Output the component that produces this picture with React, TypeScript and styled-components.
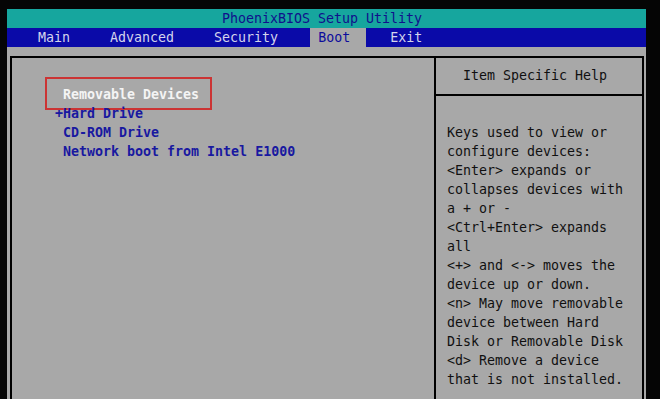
import React from 'react';
import styled, { createGlobalStyle } from 'styled-components';

const GlobalStyle = createGlobalStyle`
  html, body {
    margin: 0;
    padding: 0;
    background: #050505;
  }
  body {
    font-family: "DejaVu Sans Mono", "Liberation Mono", monospace;
  }
`;

const Screen = styled.div`
  display: flex;
  flex-direction: column;
  width: 639px;
  height: 390px;
  margin: 9px 0 0 7px;
  background: #a8a8a8;
  overflow: hidden;
  font-size: 13.3px;
  font-weight: bold;
  line-height: 19px;
`;

const TitleBar = styled.div`
  height: 19px;
  background: #16a69e;
  color: #10108c;
  text-align: center;
  font-weight: normal;
  padding-right: 9px;
`;

const MenuBar = styled.div`
  display: flex;
  gap: 16px;
  height: 19px;
  padding-left: 23px;
  background: #0a0aa8;
`;

const Tab = styled.div<{ active?: boolean }>`
  padding: 0 16px 0 8px;
  font-weight: normal;
  color: ${p => (p.active ? '#0c0c9c' : '#d4d4ec')};
  background: ${p => (p.active ? '#a8a8a8' : 'transparent')};
`;

const Body = styled.div`
  flex: 1;
  display: flex;
  padding: 9px 2px 0 3px;
`;

const Frame = styled.div`
  flex: 1;
  display: grid;
  grid-template-columns: 1fr 208px;
  border: 2px solid #000;
  border-bottom: none;
`;

const DeviceList = styled.div`
  padding: 27px 0 0 43px;
`;

const DeviceRow = styled.div`
  display: flex;
`;

const Marker = styled.span`
  width: 8px;
  color: #1818a0;
`;

const DeviceLabel = styled.span<{ selected?: boolean }>`
  position: relative;
  color: ${p => (p.selected ? '#f4f4f4' : '#1818a0')};

  ${p =>
    p.selected
      ? `&::after {
    content: '';
    position: absolute;
    left: -18px;
    right: -13px;
    top: -8px;
    bottom: -6px;
    border: 2px solid #cc3434;
  }`
      : ''}
`;

const HelpPanel = styled.div`
  border-left: 2px solid #000;
  display: flex;
  flex-direction: column;
`;

const HelpTitle = styled.div`
  height: 36px;
  line-height: 36px;
  border-bottom: 2px solid #000;
  color: #101010;
  font-weight: normal;
  text-align: center;
  padding-right: 8px;
`;

const HelpText = styled.div`
  padding: 27px 0 0 11px;
  color: #101010;
  font-weight: normal;
  white-space: pre;
`;

const tabs = ['Main', 'Advanced', 'Security', 'Boot', 'Exit'];

const devices = [
  { marker: ' ', label: 'Removable Devices', selected: true },
  { marker: '+', label: 'Hard Drive' },
  { marker: ' ', label: 'CD-ROM Drive' },
  { marker: ' ', label: 'Network boot from Intel E1000' }
];

const helpLines = [
  'Keys used to view or',
  'configure devices:',
  '<Enter> expands or',
  'collapses devices with',
  'a + or -',
  '<Ctrl+Enter> expands',
  'all',
  '<+> and <-> moves the',
  'device up or down.',
  '<n> May move removable',
  'device between Hard',
  'Disk or Removable Disk',
  '<d> Remove a device',
  'that is not installed.'
];

export default function App() {
  return (
    <>
      <GlobalStyle />
      <Screen>
        <TitleBar>PhoenixBIOS Setup Utility</TitleBar>
        <MenuBar>
          {tabs.map(t => (
            <Tab key={t} active={t === 'Boot'}>
              {t}
            </Tab>
          ))}
        </MenuBar>
        <Body>
          <Frame>
            <DeviceList>
              {devices.map(d => (
                <DeviceRow key={d.label}>
                  <Marker>{d.marker}</Marker>
                  <DeviceLabel selected={d.selected}>{d.label}</DeviceLabel>
                </DeviceRow>
              ))}
            </DeviceList>
            <HelpPanel>
              <HelpTitle>Item Specific Help</HelpTitle>
              <HelpText>{helpLines.join('\n')}</HelpText>
            </HelpPanel>
          </Frame>
        </Body>
      </Screen>
    </>
  );
}
